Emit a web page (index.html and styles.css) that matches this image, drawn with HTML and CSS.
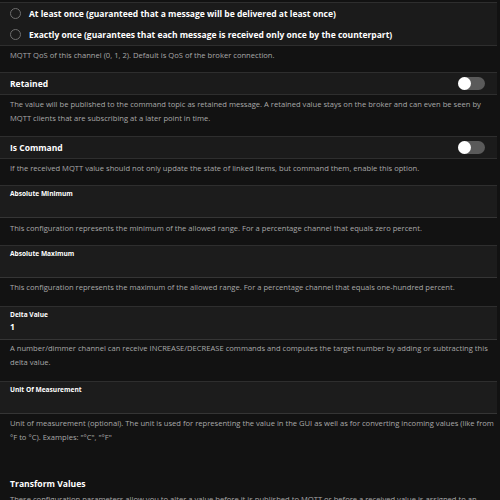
FILE: index.html
```html
<!DOCTYPE html>
<html>
<head>
<meta charset="utf-8">
<link rel="stylesheet" href="styles.css">
</head>
<body>
<div class="page">
  <ul class="list radios">
    <li class="row"><span class="radio"></span><span class="row-title">At least once (guaranteed that a message will be delivered at least once)</span></li>
    <li class="row"><span class="radio"></span><span class="row-title">Exactly once (guarantees that each message is received only once by the counterpart)</span></li>
  </ul>
  <p class="desc d1">MQTT QoS of this channel (0, 1, 2). Default is QoS of the broker connection.</p>

  <ul class="list toggles">
    <li class="row toggle-row"><span class="row-title">Retained</span><span class="toggle"><span class="knob"></span></span></li>
  </ul>
  <p class="desc d2">The value will be published to the command topic as retained message. A retained value stays on the broker and can even be seen by MQTT clients that are subscribing at a later point in time.</p>

  <ul class="list toggles">
    <li class="row toggle-row"><span class="row-title">Is Command</span><span class="toggle"><span class="knob"></span></span></li>
  </ul>
  <p class="desc d3">If the received MQTT value should not only update the state of linked items, but command them, enable this option.</p>

  <div class="field"><div class="label">Absolute Minimum</div><div class="value"></div></div>
  <p class="desc d4">This configuration represents the minimum of the allowed range. For a percentage channel that equals zero percent.</p>

  <div class="field"><div class="label">Absolute Maximum</div><div class="value"></div></div>
  <p class="desc d5">This configuration represents the maximum of the allowed range. For a percentage channel that equals one-hundred percent.</p>

  <div class="field tall"><div class="label">Delta Value</div><div class="value">1</div></div>
  <p class="desc d6">A number/dimmer channel can receive INCREASE/DECREASE commands and computes the target number by adding or subtracting this delta value.</p>

  <div class="field"><div class="label">Unit Of Measurement</div><div class="value"></div></div>
  <p class="desc d7">Unit of measurement (optional). The unit is used for representing the value in the GUI as well as for converting incoming values (like from °F to °C). Examples: "°C", "°F"</p>

  <h3 class="group">Transform Values</h3>
  <p class="desc d8">These configuration parameters allow you to alter a value before it is published to MQTT or before a received value is assigned to an item.</p>
</div>
</body>
</html>
```
FILE: styles.css
```css
html, body {
  margin: 0;
  padding: 0;
  background: #121212;
  overflow: hidden;
}
body {
  font-family: "Open Sans", "Noto Sans", sans-serif;
  color: #fff;
}
.page {
  width: 497px;
  height: 500px;
  padding-top: 2px;
  box-sizing: border-box;
  overflow: hidden;
}
.list {
  list-style: none;
  margin: 0;
  padding: 0;
  background: #1b1b1b;
  border-top: 1px solid #2e2e2e;
  border-bottom: 1px solid #2e2e2e;
}
.row {
  height: 21px;
  display: flex;
  align-items: center;
  padding: 0 10px;
}
.radio {
  width: 9px;
  height: 9px;
  border: 1px solid #6e6e6e;
  border-radius: 50%;
  margin-right: 8px;
  flex: none;
}
.row-title {
  font-size: 8.5px;
  font-weight: 700;
  white-space: nowrap;
}
.toggle-row { justify-content: space-between; padding-right: 12px; }
.toggle {
  width: 27px;
  height: 13px;
  border-radius: 7px;
  background: #5a5a5a;
  display: flex;
  align-items: center;
}
.knob {
  width: 13px;
  height: 13px;
  border-radius: 50%;
  background: #fff;
}
.desc {
  margin: 0;
  padding: 0 1px 0 10px;
  font-size: 7.6px;
  line-height: 14px;
  color: #a9a9a9;
}
.d1 { padding-top: 2px; padding-bottom: 10px; }
.d2 { padding-top: 2px; padding-bottom: 11px; }
.d3 { padding-top: 2px; padding-bottom: 10px; }
.d4 { padding-top: 3px; padding-bottom: 10px; }
.d5 { padding-top: 2px; padding-bottom: 12px; }
.d6 { padding-top: 1px; padding-bottom: 12px; }
.d7 { padding-top: 2px; }
.field {
  background: #1c1c1c;
  border-top: 1px solid #2e2e2e;
  border-bottom: 1px solid #353535;
  padding: 3px 10px 0;
  box-sizing: border-box;
  height: 33px;
}
.field.tall { height: 34px; }
.label {
  font-size: 6.6px;
  font-weight: 700;
  line-height: 9px;
}
.value {
  font-size: 8.5px;
  font-weight: 700;
  line-height: 14px;
  padding-top: 1px;
}
.group {
  margin: 33px 0 0;
  padding: 0 10px;
  font-size: 8.6px;
  font-weight: 700;
  line-height: 14px;
}
.d8 { padding-top: 1px; }
```
